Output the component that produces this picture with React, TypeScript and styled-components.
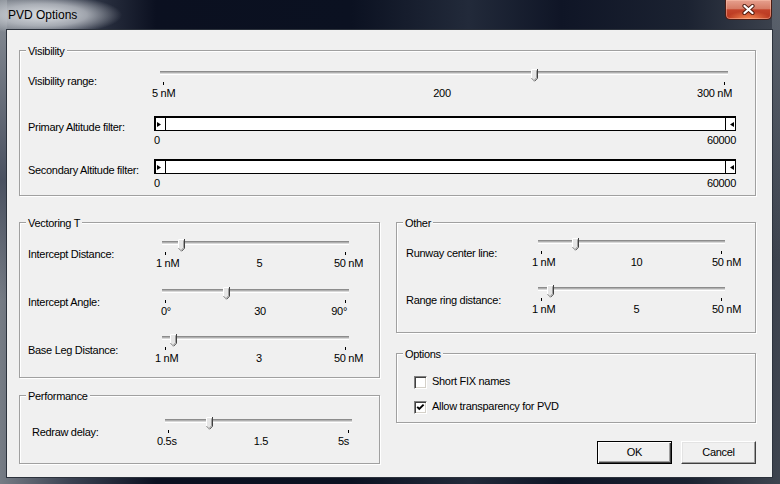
import React from "react";
import styled, { createGlobalStyle } from "styled-components";

const Global = createGlobalStyle`
  html, body { margin: 0; padding: 0; background: #000; }
  body { width: 780px; height: 484px; overflow: hidden; }
`;

const Window = styled.div`
  width: 780px;
  height: 484px;
  box-sizing: border-box;
  display: flex;
  flex-direction: column;
  font: 11px "Liberation Sans", Arial, sans-serif;
  letter-spacing: -0.3px;
  color: #000;
  background:
    radial-gradient(ellipse 78px 20px at 44px 15px, rgba(228, 231, 235, 0.95) 0%, rgba(196, 200, 206, 0.75) 55%, rgba(150, 156, 165, 0) 100%),
    linear-gradient(180deg, #8a9098 0px, #4a5160 180px, rgba(20, 26, 40, 0) 300px) 0 0 / 7px 100% no-repeat,
    linear-gradient(180deg, rgba(120, 128, 138, 0.5) 0px, rgba(20, 26, 40, 0) 260px) 772px 0 / 8px 100% no-repeat,
    linear-gradient(90deg, #767c85 0%, #3b4252 9%, #0b1020 20%, #0b1121 45%, #222a3a 60%, #0f1526 72%, #1b2231 88%, #3e444f 100%);
`;

const TitleBar = styled.div`
  height: 30px;
  flex: none;
  display: flex;
  justify-content: space-between;
  align-items: flex-start;
`;

const Title = styled.div`
  margin: 8px 0 0 8px;
  font: 12px/14px "Liberation Sans", Arial, sans-serif;
  letter-spacing: 0;
  color: #000;
`;

const CloseButton = styled.div`
  width: 47px;
  height: 20px;
  margin-right: 8px;
  box-sizing: border-box;
  display: flex;
  align-items: center;
  justify-content: center;
  border: 1px solid #4a1c14;
  border-top: none;
  border-radius: 0 0 5px 5px;
  background:
    radial-gradient(ellipse 22px 8px at 50% 100%, rgba(255, 150, 90, 0.9), rgba(255, 150, 90, 0)),
    linear-gradient(180deg, #e6a08e 0%, #d67c66 45%, #c2432a 52%, #b8361e 100%);
  box-shadow: inset 0 0 0 1px rgba(255, 200, 180, 0.45);
`;

const Client = styled.div`
  flex: 1;
  margin: 0 8px 7px 7px;
  box-sizing: border-box;
  background: #f0f0f0;
  box-shadow: 0 0 0 1px #2c323c;
  padding: 20px 0 0 12px;
  display: flex;
  flex-direction: column;
`;

const GroupBox = styled.div<{ $w: number; $h: number; $pt: number; $pl: number; $mt?: number }>`
  position: relative;
  box-sizing: border-box;
  width: ${(p) => p.$w}px;
  height: ${(p) => p.$h}px;
  margin-top: ${(p) => p.$mt ?? 0}px;
  padding: ${(p) => p.$pt}px 0 0 ${(p) => p.$pl}px;
  border: 1px solid #a0a0a0;
  box-shadow: inset 1px 1px 0 #fff, 1px 1px 0 #fff;
  display: flex;
  flex-direction: column;
  flex: none;
`;

const Legend = styled.div`
  position: absolute;
  top: -6px;
  left: 6px;
  padding: 0 2px;
  background: #f0f0f0;
  line-height: 13px;
  white-space: nowrap;
`;

const Columns = styled.div`
  display: flex;
  gap: 16px;
  margin-top: 26px;
`;

const Column = styled.div`
  display: flex;
  flex-direction: column;
`;

const Row = styled.div<{ $mt?: number }>`
  display: flex;
  align-items: flex-start;
  margin-top: ${(p) => p.$mt ?? 0}px;
`;

const RowLabel = styled.div<{ $w: number; $off: number }>`
  width: ${(p) => p.$w}px;
  flex: none;
  padding-top: ${(p) => p.$off}px;
  line-height: 13px;
  white-space: nowrap;
`;

/* ---------- Trackbar ---------- */

const TrackbarBox = styled.div<{ $len: number }>`
  width: ${(p) => p.$len}px;
  flex: none;
  position: relative;
`;

const TrackLine = styled.div`
  margin-top: 2px;
  height: 4px;
  background: linear-gradient(180deg, #8c8c8c 0 1px, #b0b0b0 1px 2px, #d8d8d8 2px 3px, #ffffff 3px 4px);
`;

const TickRow = styled.div`
  display: flex;
  justify-content: space-between;
  padding: 0 3px;
  margin-top: 7px;
`;

const Tick = styled.div`
  width: 1px;
  height: 3px;
  background: #000;
`;

const ThumbWrap = styled.div<{ $x: number }>`
  position: absolute;
  top: 0;
  left: ${(p) => p.$x}px;
  width: 7px;
  height: 13px;
  line-height: 0;
`;

const ScaleLabels = styled.div<{ $ml: number; $mr: number }>`
  display: grid;
  grid-template-columns: 1fr auto 1fr;
  margin: 2px ${(p) => p.$mr}px 0 ${(p) => p.$ml}px;
  line-height: 13px;
  white-space: nowrap;
`;

const ScaleMin = styled.span`
  justify-self: start;
`;

const ScaleMid = styled.span<{ $shift: number }>`
  padding-left: ${(p) => Math.max(0, p.$shift * 2)}px;
  padding-right: ${(p) => Math.max(0, -p.$shift * 2)}px;
`;

const ScaleMax = styled.span`
  justify-self: end;
`;

const Thumb = () => (
  <svg width="7" height="13" viewBox="0 0 7 13">
    <polygon points="0,0 7,0 7,9 3.5,12.5 0,9" fill="#e6e6e6" />
    <polyline points="0.5,9 0.5,0.5 6,0.5" fill="none" stroke="#ffffff" strokeWidth="1" />
    <polyline points="6.5,0 6.5,9.2 3.5,12.3" fill="none" stroke="#404040" strokeWidth="1" />
    <polyline points="5.5,1.5 5.5,8.8 3.5,10.8" fill="none" stroke="#a0a0a0" strokeWidth="1" />
    <polyline points="0.5,9.2 3.2,11.9" fill="none" stroke="#808080" strokeWidth="1" />
  </svg>
);

type TrackbarProps = {
  len: number;
  thumb: number;
  labels: [string, string, string];
  ml: number;
  mr: number;
  mid?: number;
};

const Trackbar = ({ len, thumb, labels, ml, mr, mid = 0 }: TrackbarProps) => (
  <TrackbarBox $len={len}>
    <TrackLine />
    <TickRow>
      <Tick />
      <Tick />
    </TickRow>
    <ThumbWrap $x={thumb}>
      <Thumb />
    </ThumbWrap>
    <ScaleLabels $ml={ml} $mr={mr}>
      <ScaleMin>{labels[0]}</ScaleMin>
      <ScaleMid $shift={mid}>{labels[1]}</ScaleMid>
      <ScaleMax>{labels[2]}</ScaleMax>
    </ScaleLabels>
  </TrackbarBox>
);

type SliderRowProps = TrackbarProps & { label: string; lw: number; off: number; mt?: number };

const SliderRow = ({ label, lw, off, mt, ...tb }: SliderRowProps) => (
  <Row $mt={mt}>
    <RowLabel $w={lw} $off={off}>{label}</RowLabel>
    <Trackbar {...tb} />
  </Row>
);

/* ---------- Range filter ---------- */

const RangeBox = styled.div`
  width: 582px;
  flex: none;
`;

const RangeBar = styled.div`
  box-sizing: border-box;
  height: 15px;
  border-style: solid;
  border-color: #000;
  border-width: 2px 1px 1px 2px;
  background: #fff;
  display: flex;
  justify-content: space-between;
`;

const Handle = styled.div<{ $side: "left" | "right" }>`
  width: 10px;
  box-sizing: border-box;
  display: flex;
  align-items: center;
  justify-content: ${(p) => (p.$side === "left" ? "flex-start" : "flex-end")};
  padding: ${(p) => (p.$side === "left" ? "0 0 0 1px" : "0 1px 0 0")};
  border-${(p) => (p.$side === "left" ? "right" : "left")}: 1px solid #000;
  line-height: 0;
`;

const RangeLabels = styled.div`
  display: flex;
  justify-content: space-between;
  margin-top: 3px;
  line-height: 13px;
`;

const RangeRow = ({ label, mt }: { label: string; mt?: number }) => (
  <Row $mt={mt}>
    <RowLabel $w={126} $off={5}>{label}</RowLabel>
    <RangeBox>
      <RangeBar>
        <Handle $side="left">
          <svg width="4" height="5" viewBox="0 0 4 5">
            <polygon points="0,0 4,2.5 0,5" fill="#000" />
          </svg>
        </Handle>
        <Handle $side="right">
          <svg width="4" height="5" viewBox="0 0 4 5">
            <polygon points="4,0 0,2.5 4,5" fill="#000" />
          </svg>
        </Handle>
      </RangeBar>
      <RangeLabels>
        <span>0</span>
        <span>60000</span>
      </RangeLabels>
    </RangeBox>
  </Row>
);

/* ---------- Checkbox ---------- */

const CheckRow = styled.label<{ $mt?: number }>`
  display: flex;
  align-items: center;
  gap: 5px;
  height: 13px;
  margin-top: ${(p) => p.$mt ?? 0}px;
`;

const CheckBox = styled.span`
  width: 13px;
  height: 13px;
  box-sizing: border-box;
  flex: none;
  background: #fff;
  border: 1px solid;
  border-color: #808080 #ffffff #ffffff #808080;
  box-shadow: inset 1px 1px 0 #404040, inset -1px -1px 0 #d4d0c8;
  line-height: 0;
`;

const CheckText = styled.span`
  line-height: 13px;
  padding-bottom: 2px;
  white-space: nowrap;
`;

const Check = ({ checked, text, mt }: { checked: boolean; text: string; mt?: number }) => (
  <CheckRow $mt={mt}>
    <CheckBox>
      {checked && (
        <svg width="11" height="11" viewBox="0 0 11 11">
          <polyline points="2.2,4.8 4.3,7 8.6,2.6" fill="none" stroke="#000" strokeWidth="1.9" />
        </svg>
      )}
    </CheckBox>
    <CheckText>{text}</CheckText>
  </CheckRow>
);

/* ---------- Buttons ---------- */

const ButtonRow = styled.div`
  display: flex;
  justify-content: flex-end;
  gap: 9px;
  margin-top: 18px;
`;

const PushButton = styled.button<{ $default?: boolean }>`
  width: 75px;
  height: 23px;
  box-sizing: border-box;
  padding: 0;
  font: inherit;
  letter-spacing: inherit;
  color: #000;
  background: #f0f0f0;
  border: 1px solid;
  border-color: ${(p) => (p.$default ? "#000" : "#fff #404040 #404040 #fff")};
  box-shadow: ${(p) =>
    p.$default
      ? "inset 1px 1px 0 #fff, inset -1px -1px 0 #404040, inset -2px -2px 0 #a0a0a0"
      : "inset -1px -1px 0 #a0a0a0, inset 1px 1px 0 #e3e3e3"};
  line-height: 13px;
`;

export default function App() {
  return (
    <>
      <Global />
      <Window>
        <TitleBar>
          <Title>PVD Options</Title>
          <CloseButton>
            <svg width="13" height="11" viewBox="0 0 13 11">
              <path d="M2.5 2 L10.5 9 M10.5 2 L2.5 9" stroke="rgba(60,15,5,0.85)" strokeWidth="4.2" strokeLinecap="round" />
              <path d="M2.5 2 L10.5 9 M10.5 2 L2.5 9" stroke="#ffffff" strokeWidth="2.3" strokeLinecap="round" />
            </svg>
          </CloseButton>
        </TitleBar>
        <Client>
          <GroupBox $w={737} $h={146} $pt={18} $pl={8}>
            <Legend>Visibility</Legend>
            <SliderRow
              label="Visibility range:"
              lw={132}
              off={6}
              len={568}
              thumb={371}
              labels={["5 nM", "200", "300 nM"]}
              ml={-8}
              mr={-4}
            />
            <RangeRow label="Primary Altitude filter:" mt={16} />
            <RangeRow label="Secondary Altitude filter:" mt={12} />
          </GroupBox>
          <Columns>
            <Column>
              <GroupBox $w={361} $h={156} $pt={16} $pl={8}>
                <Legend>Vectoring T</Legend>
                <SliderRow
                  label="Intercept Distance:"
                  lw={134}
                  off={9}
                  len={187}
                  thumb={16}
                  labels={["1 nM", "5", "50 nM"]}
                  ml={-6}
                  mr={-14}
                />
                <SliderRow
                  label="Intercept Angle:"
                  lw={134}
                  off={9}
                  mt={17}
                  len={187}
                  thumb={61}
                  labels={["0°", "30", "90°"]}
                  ml={-1}
                  mr={2}
                  mid={6}
                />
                <SliderRow
                  label="Base Leg Distance:"
                  lw={134}
                  off={10}
                  mt={16}
                  len={187}
                  thumb={8}
                  labels={["1 nM", "3", "50 nM"]}
                  ml={-7}
                  mr={-14}
                />
              </GroupBox>
              <GroupBox $w={361} $h={69} $pt={21} $pl={12} $mt={17}>
                <Legend>Performance</Legend>
                <SliderRow
                  label="Redraw delay:"
                  lw={133}
                  off={9}
                  len={187}
                  thumb={41}
                  labels={["0.5s", "1.5", "5s"]}
                  ml={-8}
                  mr={3}
                  mid={8}
                />
              </GroupBox>
            </Column>
            <Column>
              <GroupBox $w={360} $h={111} $pt={15} $pl={9}>
                <Legend>Other</Legend>
                <SliderRow
                  label="Runway center line:"
                  lw={132}
                  off={9}
                  len={187}
                  thumb={34}
                  labels={["1 nM", "10", "50 nM"]}
                  ml={-6}
                  mr={-16}
                />
                <SliderRow
                  label="Range ring distance:"
                  lw={132}
                  off={9}
                  mt={16}
                  len={187}
                  thumb={9}
                  labels={["1 nM", "5", "50 nM"]}
                  ml={-6}
                  mr={-16}
                />
              </GroupBox>
              <GroupBox $w={360} $h={70} $pt={22} $pl={17} $mt={20}>
                <Legend>Options</Legend>
                <Check checked={false} text="Short FIX names" />
                <Check checked={true} text="Allow transparency for PVD" mt={12} />
              </GroupBox>
              <ButtonRow>
                <PushButton $default>OK</PushButton>
                <PushButton>Cancel</PushButton>
              </ButtonRow>
            </Column>
          </Columns>
        </Client>
      </Window>
    </>
  );
}
